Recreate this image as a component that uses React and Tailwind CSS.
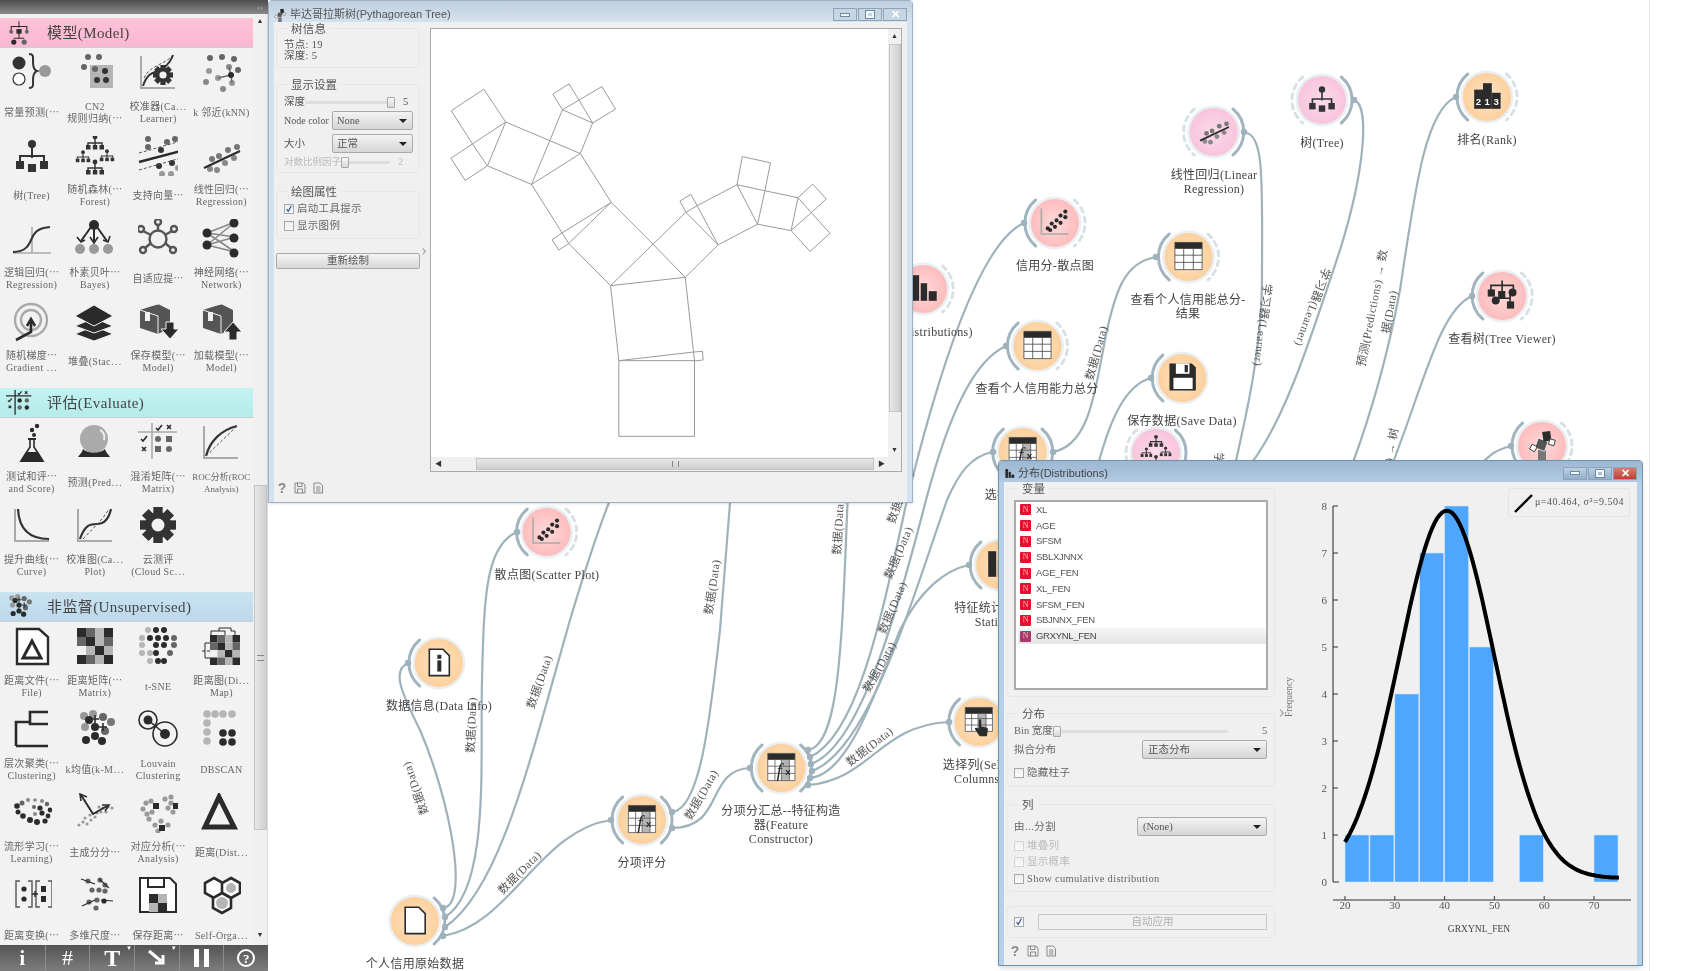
import React from 'react';

const D = '#333';
const G = '#aaa';
const dot = (x, y, r = 3, f = D) => <circle cx={x} cy={y} r={r} fill={f} />;
const box = (x, y, w, h, f = D) => <rect x={x} y={y} width={w} height={h} fill={f} />;
const line = (d, w = 2, s = D) => <path d={d} fill="none" stroke={s} strokeWidth={w} />;
const dash = (d, s = '#555') => <path d={d} fill="none" stroke={s} strokeWidth="1" strokeDasharray="3 2" />;
const axes = (s = G) => line('M3 3V35H37', 2, s);

const gear = (x, y, r) => (
  <g transform={`translate(${x} ${y})`}>
    {[0, 45, 90, 135].map((a) => (
      <rect key={a} x={-r * 0.26} y={-r} width={r * 0.52} height={r * 2} fill={D} transform={`rotate(${a})`} />
    ))}
    <circle r={r * 0.72} fill={D} />
    <circle r={r * 0.36} fill="#f2f2f2" />
  </g>
);

// dendrogram-free little tree, used for the forest icon
const miniTree = (x, y, s) => (
  <g transform={`translate(${x} ${y}) scale(${s})`}>
    {dot(0, -6, 2.4)}
    {line('M0 -4V2M-7 2V0H7V2', 1.4)}
    {box(-9, 2, 4.5, 4.5)}
    {box(-2.2, 2, 4.5, 4.5)}
    {box(4.5, 2, 4.5, 4.5)}
  </g>
);

const pixels = (cells, x0, y0, s) =>
  cells.map((row, j) => row.map((c, i) => <rect key={`${i}-${j}`} x={x0 + i * s} y={y0 + j * s} width={s} height={s} fill={c} />));

const K = '#2b2b2b';
const M = '#666';
const L = '#b5b5b5';
const W = '#f2f2f2';

const icons = {
  constant: (
    <>
      {dot(7, 10, 6.5)}
      <circle cx="7" cy="26" r="6" fill="#fff" stroke={D} strokeWidth="1.2" />
      {line('M17 1c5 0 4 3 4 8c0 5 1 8 4 9c-3 1-4 4-4 9c0 5 1 8-4 8', 2)}
      {dot(33, 18, 6, '#999')}
    </>
  ),
  cn2: (
    <>
      {box(15, 12, 23, 23, L)}
      {dot(13, 4, 3, M)}
      {dot(24, 4, 3, M)}
      {dot(9, 14, 3, M)}
      {dot(20, 16, 3, M)}
      {dot(30, 18, 3)}
      {dot(22, 27, 3)}
      {dot(31, 27, 3)}
    </>
  ),
  calib: (
    <>
      {axes()}
      {line('M5 33C10 18 17 20 24 16C30 12 33 8 35 2', 2)}
      {dash('M6 25C12 12 26 12 34 3')}
      {gear(25, 22, 10)}
    </>
  ),
  knn: (
    <>
      {dot(9, 5, 3, M)}
      {dot(21, 4, 3, M)}
      {dot(33, 6, 3, M)}
      {dot(8, 18, 3, '#999')}
      {dot(37, 17, 3, M)}
      {dot(5, 29, 3, '#888')}
      {dot(17, 25, 3, '#999')}
      {dot(28, 14, 3, '#888')}
      {dot(31, 30, 3, '#999')}
      {dot(22, 36, 3, '#888')}
      {line('M17 25L30 22L28 14M30 22L31 30', 1.4, M)}
      {dot(30, 22, 3, K)}
    </>
  ),
  tree: (
    <>
      {dot(20, 8, 4)}
      {line('M20 10V22M8 30V20H32V30', 2)}
      {box(4, 25, 8, 8)}
      {box(16, 28, 8, 8)}
      {box(28, 25, 8, 8)}
    </>
  ),
  forest: (
    <>
      {miniTree(20, 7, 1)}
      {miniTree(8, 21, 0.8)}
      {miniTree(32, 20, 0.8)}
      {miniTree(20, 32, 1)}
    </>
  ),
  svm: (
    <>
      {dot(10, 3, 3, M)}
      {dot(10, 11, 3, M)}
      {dot(23, 14, 3)}
      {dot(29, 6, 3, M)}
      {dot(37, 3, 3, M)}
      {dot(21, 30, 3)}
      {dot(34, 27, 3)}
      {dot(24, 38, 3, '#999')}
      {dot(33, 38, 3, '#999')}
      {dot(40, 32, 3, '#999')}
      {dash('M1 17L43 5')}
      {dash('M1 34L43 22')}
      {line('M1 26L43 15', 2.4, K)}
    </>
  ),
  linear: (
    <>
      {dot(9, 33, 3, '#888')}
      {dot(16, 34, 3, '#888')}
      {dot(11, 23, 3, '#777')}
      {dot(18, 20, 3, '#777')}
      {dot(24, 27, 3, '#888')}
      {dot(27, 14, 3, '#777')}
      {dot(33, 22, 3, '#888')}
      {dot(36, 11, 3, '#777')}
      {line('M3 32L39 15', 2.2, K)}
    </>
  ),
  logistic: (
    <>
      {line('M1 34H39M20 8V34', 1.6, G)}
      {line('M1 33C14 33 17 26 20 19C24 10 30 9 38 8', 2)}
    </>
  ),
  nb: (
    <>
      {dot(19, 6, 5, K)}
      {line('M19 8V22M16 8L6 22M22 8L32 22', 2, K)}
      {line('M2 18L6 23L10 21M15 18L19 24L23 18M28 21L33 23L35 17', 1.6, K)}
      {dot(5, 30, 5, '#999')}
      {dot(19, 30, 5, '#999')}
      {dot(33, 30, 5, '#999')}
    </>
  ),
  ada: (
    <g fill="#f2f2f2" stroke="#555" strokeWidth="2.4">
      <path d="M20 12V6M27 16L34 12M27 24L33 29M13 24L7 29M13 16L5 12" />
      <circle cx="20" cy="20" r="8.5" />
      <circle cx="20" cy="3" r="3" />
      <circle cx="36" cy="10" r="3" />
      <circle cx="35" cy="31" r="3" />
      <circle cx="5" cy="31" r="3" />
      <circle cx="3" cy="10" r="3" />
    </g>
  ),
  nn: (
    <>
      {line('M6 14L34 3M6 14L34 18M6 14L34 33M6 26L34 3M6 26L34 18M6 26L34 33', 1.6, '#888')}
      {dot(6, 14, 4.5, K)}
      {dot(6, 26, 4.5, K)}
      {dot(33, 4, 4.5, K)}
      {dot(33, 19, 4.5, K)}
      {dot(33, 34, 4.5, K)}
    </>
  ),
  sgd: (
    <>
      <circle cx="19" cy="18" r="16" fill="none" stroke={G} strokeWidth="2.4" />
      <circle cx="19" cy="18" r="10" fill="none" stroke={G} strokeWidth="2.4" />
      {line('M4 38L19 30V20', 2.6, K)}
      {line('M15 24L19 17L23 24', 2.6, K)}
    </>
  ),
  stack: (
    <>
      <path d="M19 24L38 32L19 39L0 32Z" fill={K} stroke="#f2f2f2" />
      <path d="M19 16L38 24L19 31L0 24Z" fill={K} stroke="#f2f2f2" />
      <path d="M19 3L38 14L19 24L0 14Z" fill={K} stroke="#f2f2f2" />
    </>
  ),
  saveModel: (
    <>
      <path d="M2 8L20 2L32 8V26L20 32L2 26Z" fill="#555" />
      <path d="M8 5L24 1M2 8L20 14V32" fill="none" stroke="#f2f2f2" />
      {box(7, 10, 5, 9, '#f2f2f2')}
      <path d="M28 20H36V27H41L32 37L23 27H28Z" fill={K} stroke="#f2f2f2" />
    </>
  ),
  loadModel: (
    <>
      <path d="M2 8L20 2L32 8V26L20 32L2 26Z" fill="#555" />
      <path d="M8 5L24 1M2 8L20 14V32" fill="none" stroke="#f2f2f2" />
      {box(7, 10, 5, 9, '#f2f2f2')}
      <path d="M28 38H36V30H41L32 20L23 30H28Z" fill={K} stroke="#f2f2f2" />
    </>
  ),
  test: (
    <>
      {dot(25, 3, 2.2, K)}
      {dot(20, 7, 2.2, K)}
      {dot(22, 12, 2, K)}
      {line('M16 16H24', 2, K)}
      {line('M18 16V24L9 38H31L22 24V16', 1.6, K)}
      <path d="M14 29H26L32 39H8Z" fill={K} />
    </>
  ),
  pred: (
    <>
      <circle cx="19" cy="16" r="14" fill="#aaa" />
      <path d="M25 7C29 9 30 13 29 17" stroke="#eee" strokeWidth="2" fill="none" />
      <path d="M8 26C7 30 4 32 3 34H35C34 32 31 30 30 26C25 31 13 31 8 26Z" fill={K} />
    </>
  ),
  confusion: (
    <>
      {line('M0 9H39M14 0V36', 1.6, G)}
      {line('M18 5L20 7L24 2', 1.6, K)}
      {line('M29 2L33 6M33 2L29 6', 1.6, K)}
      {line('M3 16L5 18L9 13', 1.6, K)}
      {line('M4 24L8 28M8 24L4 28', 1.6, K)}
      {dot(20, 16, 3, M)}
      {box(28, 13, 6, 6, M)}
      {box(17, 23, 6, 6, M)}
      {dot(31, 26, 3, M)}
    </>
  ),
  confHead: (
    <>
      {line('M0 9H39M14 0V38', 2, K)}
      {line('M18 5L20 7L24 2', 1.8, K)}
      {line('M29 2L33 6M33 2L29 6', 1.8, K)}
      {line('M3 16L5 18L9 13', 1.8, K)}
      {line('M4 24L8 28M8 24L4 28', 1.8, K)}
      {dot(21, 16, 3.4, K)}
      {dot(32, 16, 3.4, M)}
      {dot(21, 27, 3.4, M)}
      {dot(32, 27, 3.4, K)}
    </>
  ),
  roc: (
    <>
      {axes()}
      {line('M5 33C9 18 20 7 36 3', 2.2)}
      {dash('M5 33L36 3')}
    </>
  ),
  lift: (
    <>
      {axes()}
      {line('M6 3C7 24 18 33 37 33', 2.2)}
    </>
  ),
  calPlot: (
    <>
      {axes()}
      {line('M5 33C10 18 16 18 22 18C30 18 34 12 36 3', 2.2)}
      {dash('M8 33C18 22 26 16 34 3')}
    </>
  ),
  cloud: gear(20, 19, 18),
  distFile: (
    <>
      <path d="M5 2H27L36 10V37H5Z" fill="#fff" stroke={K} strokeWidth="2.4" />
      <path d="M20 14L29 31H11Z" fill="none" stroke={K} strokeWidth="3" />
    </>
  ),
  distMatrix: pixels(
    [
      [K, M, L, K],
      [M, K, L, M],
      [W, L, K, L],
      [K, M, L, K],
    ],
    2,
    1,
    9
  ),
  tsne: (
    <>
      {[
        [12, 3, L],
        [20, 3, K],
        [28, 3, K],
        [6, 11, L],
        [14, 11, K],
        [22, 11, K],
        [30, 11, K],
        [38, 11, M],
        [6, 18, L],
        [20, 18, K],
        [28, 18, K],
        [38, 18, M],
        [6, 26, L],
        [14, 26, L],
        [20, 26, K],
        [34, 26, M],
        [14, 34, L],
        [22, 34, K],
        [28, 34, K],
      ].map(([x, y, f]) => (
        <circle key={`${x}-${y}`} cx={x - 2} cy={y} r="3" fill={f} />
      ))}
    </>
  ),
  distMap: (
    <>
      {line('M10 8V4H18V1H30V4H34V8M18 4H24V8', 1, K)}
      {line('M10 16H4V31H10M4 24H1M6 24H10', 1, K)}
      {pixels(
        [
          [K, M, L, K],
          [M, K, L, M],
          [W, L, K, L],
          [K, M, L, K],
        ],
        9,
        8,
        7.5
      )}
    </>
  ),
  hier: <>{line('M4 36V12H18V2H36M18 12V14H36M4 36H36', 2.6, K)}</>,
  kmeans: (
    <>
      {dot(9, 6, 4, '#999')}
      {dot(18, 4, 4, '#999')}
      {dot(28, 7, 4, '#666')}
      {dot(36, 12, 4, '#777')}
      {dot(10, 17, 4, '#999')}
      {dot(20, 17, 4, K)}
      {dot(14, 10, 4, K)}
      {dot(30, 21, 4, '#666')}
      {dot(20, 26, 4, K)}
      {dot(11, 30, 4, K)}
      {dot(27, 31, 4, K)}
      {line('M16 9H24M20 5V13M24 17H32M28 13V21', 1.6, K)}
    </>
  ),
  louvain: (
    <>
      <circle cx="10" cy="10" r="9" fill="none" stroke={K} strokeWidth="1.6" />
      {dot(10, 10, 4.5, K)}
      <circle cx="27" cy="24" r="12" fill="none" stroke={K} strokeWidth="1.6" />
      {dot(27, 24, 5, K)}
      {line('M10 10L27 24', 1.6, K)}
    </>
  ),
  dbscan: (
    <>
      {[
        [6, 4],
        [14, 4],
        [22, 4],
        [31, 4],
        [6, 13],
        [6, 22],
        [6, 31],
      ].map(([x, y]) => (
        <circle key={`${x}-${y}`} cx={x} cy={y} r="3.8" fill={L} />
      ))}
      {dot(22, 23, 3.8, K)}
      {dot(31, 23, 3.8, K)}
      {dot(22, 32, 3.8, K)}
      {dot(31, 32, 3.8, K)}
    </>
  ),
  manifold: (
    <>
      {[
        [5, 13, 2.8, K],
        [10, 10, 2.5, M],
        [16, 7, 2, '#888'],
        [23, 7, 1.8, '#888'],
        [30, 8, 2, '#888'],
        [35, 11, 2.2, M],
        [38, 17, 2.4, K],
        [36, 23, 2.4, K],
        [33, 28, 2.6, K],
        [25, 29, 3, K],
        [18, 27, 3, K],
        [11, 23, 2.8, K],
        [6, 19, 2.5, K],
        [22, 14, 2, M],
        [28, 15, 2.6, K],
        [30, 20, 2.6, K],
        [23, 21, 2, '#888'],
      ].map(([x, y, r, f]) => (
        <circle key={`${x}-${y}`} cx={x} cy={y} r={r} fill={f} />
      ))}
    </>
  ),
  pca: (
    <>
      {[
        [4, 32],
        [8, 29],
        [12, 31],
        [10, 25],
        [16, 27],
        [15, 22],
        [20, 24],
        [22, 20],
        [26, 19],
        [28, 15],
        [33, 14],
        [37, 15],
        [31, 19],
        [24, 14],
      ].map(([x, y]) => (
        <circle key={`${x}-${y}`} cx={x} cy={y} r="1.6" fill="#999" />
      ))}
      {line('M6 2L18 21L32 13', 2, K)}
      {line('M6 8L5 1L12 4M27 12L34 12L30 18', 1.6, K)}
    </>
  ),
  ca: (
    <>
      {[
        [5, 16],
        [8, 10],
        [13, 8],
        [9, 21],
        [14, 19],
        [11, 26],
        [27, 6],
        [33, 4],
        [33, 10],
        [30, 15],
        [35, 19],
        [17, 32],
        [23, 28],
        [30, 32],
        [20, 38],
      ].map(([x, y]) => (
        <circle key={`${x}-${y}`} cx={x} cy={y} r="2.6" fill="#999" />
      ))}
      {box(15, 10, 6, 6, K)}
      {box(35, 10, 6, 6, K)}
      {box(21, 32, 6, 6, K)}
    </>
  ),
  distance: <path d="M18 4L33 34H4Z" fill="none" stroke={K} strokeWidth="5" />,
  distTrans: (
    <>
      {line('M8 5H4V31H8M16 5H20V31H16M28 5H24V31H28M36 5H40V31H36', 1.4, '#555')}
      {dot(12, 13, 2.6, K)}
      {dot(12, 23, 2.6, K)}
      {box(29, 10, 5, 6, K)}
      {box(29, 20, 5, 6, K)}
      {line('M20 18H26M23 15V21', 1.4, K)}
    </>
  ),
  mds: (
    <>
      {dot(13, 5, 2.6, M)}
      {dot(25, 4, 2.6, M)}
      {dot(30, 9, 2.6, M)}
      {dot(17, 14, 2.6, M)}
      {dot(24, 14, 2.6, M)}
      {dot(30, 15, 2.6, M)}
      {dot(14, 26, 2.6, M)}
      {dot(22, 24, 2.6, M)}
      {dot(29, 25, 2.6, K)}
      {dot(21, 32, 2.6, M)}
      {line('M6 3L20 8M24 3L34 12M7 30L20 24M26 24L38 25', 1.2, K)}
    </>
  ),
  saveDist: (
    <>
      <path d="M2 2H32L38 8V36H2Z" fill="#fff" stroke={K} strokeWidth="2" />
      {line('M10 2V11H26V2', 2, K)}
      {pixels(
        [
          [K, L],
          [L, K],
        ],
        11,
        18,
        9
      )}
    </>
  ),
  som: (
    <g stroke={K} strokeWidth="2.6">
      <path d="M13 2L22 7V17L13 22L4 17V7Z" fill="#fff" />
      <path d="M30 2L39 7V17L30 22L21 17V7Z" fill="#fff" />
      <path d="M21 17L30 22V32L21 37L12 32V22Z" fill="#fff" />
      <circle cx="30" cy="12" r="5" fill={L} stroke="none" />
      <circle cx="21" cy="27" r="6" fill={L} stroke="none" />
    </g>
  ),
  file: <path d="M8 4H25L33 12V37H8Z" fill="#fff" stroke={K} strokeWidth="2" />,
  info: (
    <>
      <path d="M8 4H25L33 12V37H8Z" fill="#fff" stroke={K} strokeWidth="2" />
      {box(18, 18, 5, 14, K)}
      {box(18, 11, 5, 5, K)}
    </>
  ),
  table: (
    <>
      {box(3, 3, 34, 34, '#fff')}
      {box(3, 3, 34, 8, K)}
      {line('M3 3H37V37H3ZM3 19H37M3 28H37M14 11V37M26 11V37', 1, '#444')}
    </>
  ),
  fx: (
    <>
      {box(3, 3, 34, 34, '#fff')}
      {box(20, 11, 10, 26, L)}
      {box(3, 3, 34, 8, K)}
      {line('M3 3H37V37H3ZM3 19H37M3 28H37M12 11V37M20 11V37M30 11V37', 1, '#555')}
      <text x="14" y="33" fontSize="24" fontFamily="Liberation Serif" fontStyle="italic" fill={K}>f</text>
      <text x="25" y="30" fontSize="12" fontFamily="Liberation Sans" fontWeight="700" fill={K}>x</text>
    </>
  ),
  select: (
    <>
      {box(3, 3, 34, 30, '#fff')}
      {box(19, 11, 10, 22, L)}
      {box(3, 3, 34, 8, K)}
      {line('M3 3H37V33H3ZM3 17H37M3 25H37M11 11V33M19 11V33M29 11V33', 1, '#555')}
      <path d="M20 20c0-3 3-3 3 0v7l6 1c2 0 3 2 2 5l-1 6h-9l-6-9c0-2 3-2 5 0Z" fill={K} />
    </>
  ),
  save: (
    <>
      <path d="M4 3H32L37 8V37H4Z" fill={K} />
      {box(12, 3, 17, 13, '#fff')}
      {box(23, 5, 4, 9, K)}
      {box(9, 21, 24, 14, '#fff')}
    </>
  ),
  scatter: (
    <>
      {axes(G)}
      {dot(11, 28, 2.6, K)}
      {dot(16, 22, 2.6, K)}
      {dot(20, 26, 2.6, K)}
      {dot(22, 18, 2.6, K)}
      {dot(27, 21, 2.6, K)}
      {dot(27, 12, 2.6, K)}
      {dot(33, 14, 2.6, K)}
      {dot(33, 7, 2.6, K)}
      {dot(14, 30, 2.6, K)}
    </>
  ),
  bars: (
    <>
      {box(5, 4, 10, 32, K)}
      {box(17, 14, 8, 22, K)}
      {box(27, 24, 10, 12, K)}
    </>
  ),
  rank: (
    <>
      {box(4, 12, 11, 24, K)}
      {box(15, 4, 11, 32, K)}
      {box(26, 16, 11, 20, K)}
      <text x="6" y="31" fontSize="12" fontFamily="Liberation Sans" fontWeight="700" fill="#fff">2</text>
      <text x="17" y="31" fontSize="12" fontFamily="Liberation Sans" fontWeight="700" fill="#fff">1</text>
      <text x="28" y="31" fontSize="12" fontFamily="Liberation Sans" fontWeight="700" fill="#fff">3</text>
    </>
  ),
  treeView: (
    <>
      {line('M20 2V8M6 14V8H34V14M20 8V18M30 20V30M12 24H30', 2, K)}
      {box(2, 13, 9, 9, K)}
      {box(15, 15, 9, 9, K)}
      {dot(33, 17, 5, K)}
      {dot(12, 27, 5, K)}
      {box(26, 28, 9, 9, K)}
    </>
  ),
  pyth: (
    <>
      {box(15, 26, 10, 14, '#777')}
      <rect x="13" y="13" width="13" height="13" fill="#555" stroke="#f2f2f2" transform="rotate(20 19 19)" />
      <rect x="21" y="3" width="10" height="12" fill={K} transform="rotate(-8 26 9)" />
      <rect x="6" y="20" width="7" height="7" fill="#fff" stroke={K} transform="rotate(30 9 23)" />
      <rect x="29" y="13" width="7" height="7" fill="#fff" stroke={K} transform="rotate(15 32 16)" />
    </>
  ),
  forestHead: (
    <>
      {line('M20 2V12M8 18V10H32V18M20 20V28M12 28H28', 1.6, K)}
      {dot(8, 18, 3, M)}
      {box(16, 14, 8, 7, K)}
      {dot(32, 18, 3, M)}
      {dot(12, 34, 4, K)}
      {dot(28, 34, 4, M)}
    </>
  ),
};

const sections = [
  {
    title: '模型(Model)',
    icon: 'forestHead',
    head: 'bg-gradient-to-b from-[#fdc2d8] to-[#f9b8d1]',
    items: [
      ['constant', '常量预测(⋯'],
      ['cn2', 'CN2', '规则归纳(⋯'],
      ['calib', '校准器(Ca⋯', 'Learner)'],
      ['knn', 'k 邻近(kNN)'],
      ['tree', '树(Tree)'],
      ['forest', '随机森林(⋯', 'Forest)'],
      ['svm', '支持向量⋯'],
      ['linear', '线性回归(⋯', 'Regression)'],
      ['logistic', '逻辑回归(⋯', 'Regression)'],
      ['nb', '朴素贝叶⋯', 'Bayes)'],
      ['ada', '自适应提⋯'],
      ['nn', '神经网络(⋯', 'Network)'],
      ['sgd', '随机梯度⋯', 'Gradient ⋯'],
      ['stack', '堆叠(Stac⋯'],
      ['saveModel', '保存模型(⋯', 'Model)'],
      ['loadModel', '加载模型(⋯', 'Model)'],
    ],
  },
  {
    title: '评估(Evaluate)',
    icon: 'confHead',
    head: 'bg-gradient-to-b from-[#c2f3f2] to-[#b5ebea]',
    items: [
      ['test', '测试和评⋯', 'and Score)'],
      ['pred', '预测(Pred⋯'],
      ['confusion', '混淆矩阵(⋯', 'Matrix)'],
      ['roc', 'ROC分析(ROC', 'Analysis)'],
      ['lift', '提升曲线(⋯', 'Curve)'],
      ['calPlot', '校准图(Ca⋯', 'Plot)'],
      ['cloud', '云测评', '(Cloud Sc⋯'],
    ],
  },
  {
    title: '非监督(Unsupervised)',
    icon: 'kmeans',
    head: 'bg-gradient-to-b from-[#c9e3f2] to-[#bcd8ea]',
    items: [
      ['distFile', '距离文件(⋯', 'File)'],
      ['distMatrix', '距离矩阵(⋯', 'Matrix)'],
      ['tsne', 't-SNE'],
      ['distMap', '距离图(Di⋯', 'Map)'],
      ['hier', '层次聚类(⋯', 'Clustering)'],
      ['kmeans', 'k均值(k-M⋯'],
      ['louvain', 'Louvain', 'Clustering'],
      ['dbscan', 'DBSCAN'],
      ['manifold', '流形学习(⋯', 'Learning)'],
      ['pca', '主成分分⋯'],
      ['ca', '对应分析(⋯', 'Analysis)'],
      ['distance', '距离(Dist⋯'],
      ['distTrans', '距离变换(⋯'],
      ['mds', '多维尺度⋯'],
      ['saveDist', '保存距离⋯'],
      ['som', 'Self-Orga⋯'],
    ],
  },
];

const Icon = ({ name, className }) => (
  <svg viewBox="0 0 40 40" className={className}>
    {icons[name]}
  </svg>
);

const Sidebar = () => (
  <aside className="relative z-10 flex h-full w-[268px] flex-col bg-[#f2f2f2]">
    <div className="flex h-[14px] shrink-0 items-center justify-end bg-gradient-to-b from-[#4f4f4f] to-[#8a8a8a] pr-[5px] text-[9px] leading-none text-[#bbb]">‹‹</div>
    <div className="flex min-h-0 flex-1 overflow-hidden border-r border-[#ddd]">
      <div className="w-[253px] shrink-0 overflow-hidden pt-[4px]">
        {sections.map((s) => (
          <section key={s.title} className="mb-[8px]">
            <div className={`flex h-[30px] items-center border-b border-[#c8d0d0] ${s.head}`}>
              <Icon name={s.icon} className="ml-[6px] h-[26px] w-[26px]" />
              <span className="mt-[1px] ml-[15px] text-[15px] tracking-[0.4px] text-[#444]">{s.title}</span>
            </div>
            <div className="grid grid-cols-4">
              {s.items.map(([icon, ...lines]) => (
                <div key={icon} className="flex h-[83px] flex-col items-center">
                  <Icon name={icon} className="mt-[5px] h-10 w-10 shrink-0" />
                  <div className={`mt-[5px] flex h-[30px] flex-col justify-center text-center leading-[12px] whitespace-nowrap text-[#666] ${icon === 'roc' ? 'text-[9px]' : 'text-[10px] tracking-[0.3px]'}`}>
                    {lines.map((l) => (
                      <div key={l}>{l}</div>
                    ))}
                  </div>
                </div>
              ))}
            </div>
          </section>
        ))}
      </div>
      <div className="flex w-[14px] flex-col items-center bg-[#f0f0f0]">
        <span className="mt-[3px] text-[7px] leading-[8px] text-[#333]">▲</span>
        <div className="mt-[460px] flex h-[345px] w-[13px] items-center justify-center border border-[#c4c4c4] bg-gradient-to-r from-[#e8e8e8] to-[#d0d0d0]">
          <div className="h-[6px] w-[7px] border-y border-[#888]" />
        </div>
        <span className="mt-auto mb-[6px] text-[7px] leading-[8px] text-[#333]">▼</span>
      </div>
    </div>
    <div className="grid h-[26px] shrink-0 grid-cols-6 overflow-hidden bg-gradient-to-b from-[#555] to-[#7d7d7d] leading-none text-white">
      <div className="flex h-[26px] items-center justify-center text-[20px] font-bold">i</div>
      <div className="flex h-[26px] items-center justify-center border-l border-[#8c8c8c] text-[22px]">#</div>
      <div className="relative flex h-[26px] items-center justify-center border-l border-[#8c8c8c] text-[24px] font-bold">
        T<span className="absolute top-0 right-[2px] text-[6px]">▼</span>
      </div>
      <div className="relative flex h-[26px] items-center justify-center border-l border-[#8c8c8c]">
        <svg viewBox="0 0 20 20" className="h-5 w-5">
          <path d="M2 3L14 13M8 15H16V7" fill="none" stroke="#fff" strokeWidth="3" />
        </svg>
        <span className="absolute top-0 right-[2px] text-[6px]">▼</span>
      </div>
      <div className="flex h-[26px] items-center justify-center gap-[5px] border-l border-[#8c8c8c]">
        <div className="h-[18px] w-[5px] bg-white" />
        <div className="h-[18px] w-[5px] bg-white" />
      </div>
      <div className="flex h-[26px] items-center justify-center border-l border-[#8c8c8c]">
        <div className="flex h-[18px] w-[18px] items-center justify-center rounded-full border-2 border-white text-[13px] font-bold">?</div>
      </div>
    </div>
  </aside>
);

const ARC_L = 'M16.7 13A30 30 0 0 0 16.7 59';
const ARC_R = 'M55.3 13A30 30 0 0 1 55.3 59';

const FILL = { orange: 'url(#nodeOrange)', pink: 'url(#nodePink)', red: 'url(#nodeRed)' };

const nodes = [
  { pos: 'left-[415px] top-[921px]', fill: 'orange', icon: 'file', r: 'solid', lines: ['个人信用原始数据'] },
  { pos: 'left-[439px] top-[663px]', fill: 'orange', icon: 'info', l: 'solid', lines: ['数据信息(Data Info)'] },
  { pos: 'left-[547px] top-[532px]', fill: 'red', icon: 'scatter', l: 'solid', r: 'dash', lines: ['散点图(Scatter Plot)'] },
  { pos: 'left-[642px] top-[820px]', fill: 'orange', icon: 'fx', l: 'solid', r: 'solid', lines: ['分项评分'] },
  { pos: 'left-[781px] top-[768px]', fill: 'orange', icon: 'fx', l: 'solid', r: 'solid', lines: ['分项分汇总--特征构造', '器(Feature', 'Constructor)'] },
  { pos: 'left-[979px] top-[722px]', fill: 'orange', icon: 'select', l: 'solid', lines: ['选择列(Select', 'Columns)'] },
  { pos: 'left-[1000px] top-[565px]', fill: 'orange', icon: 'bars', l: 'solid', lines: ['特征统计(Feature', 'Statistics)'] },
  { pos: 'left-[923px] top-[289px]', fill: 'red', icon: 'bars', r: 'dash', lines: ['分布(Distributions)'] },
  { pos: 'left-[1037px] top-[346px]', fill: 'orange', icon: 'table', l: 'solid', r: 'dash', lines: ['查看个人信用能力总分'] },
  { pos: 'left-[1055px] top-[223px]', fill: 'red', icon: 'scatter', l: 'solid', r: 'dash', lines: ['信用分-散点图'] },
  { pos: 'left-[1188px] top-[257px]', fill: 'orange', icon: 'table', l: 'solid', r: 'dash', lines: ['查看个人信用能总分-', '结果'] },
  { pos: 'left-[1182px] top-[378px]', fill: 'orange', icon: 'save', l: 'solid', lines: ['保存数据(Save Data)'] },
  { pos: 'left-[1214px] top-[132px]', fill: 'pink', icon: 'linear', l: 'dash', r: 'solid', lines: ['线性回归(Linear', 'Regression)'] },
  { pos: 'left-[1322px] top-[100px]', fill: 'pink', icon: 'tree', l: 'dash', r: 'solid', lines: ['树(Tree)'] },
  { pos: 'left-[1487px] top-[97px]', fill: 'orange', icon: 'rank', l: 'solid', r: 'dash', lines: ['排名(Rank)'] },
  { pos: 'left-[1502px] top-[296px]', fill: 'red', icon: 'treeView', l: 'solid', r: 'dash', lines: ['查看树(Tree Viewer)'] },
  { pos: 'left-[1542px] top-[446px]', fill: 'red', icon: 'pyth', l: 'solid', r: 'dash', lines: [] },
  { pos: 'left-[1023px] top-[452px]', fill: 'orange', icon: 'fx', l: 'solid', r: 'solid', lines: ['选择列(Select)'] },
  { pos: 'left-[1156px] top-[453px]', fill: 'pink', icon: 'forest', l: 'dash', r: 'solid', lines: [] },
];

const Node = ({ pos, fill, icon, l, r, lines }) => (
  <div className={`absolute flex -translate-x-1/2 -translate-y-[36px] flex-col items-center ${pos}`}>
    <svg width="72" height="72" viewBox="0 0 72 72" className="shrink-0">
      <circle cx="36" cy="36" r="26.5" fill="#e9eff2" />
      <circle cx="36" cy="36" r="24" fill={FILL[fill]} />
      {l && <path d={ARC_L} fill="none" stroke={l === 'solid' ? '#a2b5be' : '#d9e1e5'} strokeWidth="3" strokeLinecap="round" strokeDasharray={l === 'solid' ? undefined : '5 5'} />}
      {r && <path d={ARC_R} fill="none" stroke={r === 'solid' ? '#a2b5be' : '#d9e1e5'} strokeWidth="3" strokeLinecap="round" strokeDasharray={r === 'solid' ? undefined : '5 5'} />}
      <g transform="translate(20 19) scale(0.8)">{icons[icon]}</g>
    </svg>
    <div className="text-center text-[12px] leading-[14px] tracking-[0.3px] whitespace-nowrap text-[#444]">
      {lines.map((t) => (
        <div key={t}>{t}</div>
      ))}
    </div>
  </div>
);

const links = [
  'M443 908C470 905 450 800 420 730C400 690 392 670 408 663',
  'M445 917C490 890 480 760 482 680C484 600 485 545 517 532',
  'M445 927C500 890 530 760 570 620C585 570 600 525 610 500',
  'M443 936C510 925 540 830 611 820',
  'M672 812C700 810 710 720 720 630C725 570 728 530 731 490',
  'M672 828C725 828 705 770 750 768',
  'M808 750C840 745 842 640 848 490',
  'M810 757C860 735 885 600 907 500C945 345 985 240 1024 223',
  'M811 764C865 745 905 580 926 500C950 410 975 360 1006 346',
  'M812 771C870 750 915 590 947 500C958 475 970 456 993 452',
  'M810 778C850 775 880 680 900 630C920 590 945 570 969 565',
  'M808 785C870 780 880 725 949 722',
  'M1053 452C1090 445 1095 390 1105 340C1115 290 1125 262 1156 257',
  'M1098 465C1110 420 1125 385 1151 378',
  'M1244 132C1265 135 1262 180 1262 280C1262 350 1245 420 1235 465',
  'M1354 100C1370 105 1365 170 1340 250C1310 340 1285 420 1250 465',
  'M1456 97C1425 110 1415 190 1400 290C1385 370 1365 430 1352 465',
  'M1472 296C1440 310 1425 380 1392 465',
  'M1511 446C1495 450 1490 455 1480 465',
];

const ports = [
  [443, 908], [445, 917], [445, 927], [443, 936], [408, 663], [517, 532], [611, 820], [672, 812], [672, 828], [750, 768],
  [808, 750], [810, 757], [811, 764], [812, 771], [810, 778], [808, 785], [949, 722], [969, 565], [1006, 346], [1024, 223],
  [1156, 257], [1151, 378], [1244, 132], [1354, 100], [1456, 97], [1472, 296], [1511, 446], [993, 452], [1053, 452],
];

const linkLabels = [
  ['left-[416px] top-[788px] -rotate-[110deg]', '数据(Data)'],
  ['left-[472px] top-[725px] -rotate-[88deg]', '数据(Data)'],
  ['left-[540px] top-[682px] -rotate-[71deg]', '数据(Data)'],
  ['left-[520px] top-[873px] -rotate-[45deg]', '数据(Data)'],
  ['left-[713px] top-[587px] -rotate-[82deg]', '数据(Data)'],
  ['left-[702px] top-[795px] -rotate-[60deg]', '数据(Data)'],
  ['left-[839px] top-[527px] -rotate-[87deg]', '数据(Data)'],
  ['left-[899px] top-[553px] -rotate-[67deg]', '数据(Data)'],
  ['left-[893px] top-[608px] -rotate-[67deg]', '数据(Data)'],
  ['left-[880px] top-[667px] -rotate-[61deg]', '数据(Data)'],
  ['left-[870px] top-[747px] -rotate-[38deg]', '数据(Data)'],
  ['left-[901px] top-[497px] -rotate-[70deg]', '数据(Data)'],
  ['left-[1097px] top-[353px] -rotate-[75deg]', '数据(Data)'],
  ['left-[1262px] top-[325px] rotate-[97deg]', '学习器(Learner)'],
  ['left-[1312px] top-[307px] rotate-[110deg]', '学习器(Learner)'],
  ['left-[1373px] top-[308px] -rotate-[79deg]', '预测(Predictions) → 数'],
  ['left-[1390px] top-[312px] -rotate-[80deg]', '据(Data)'],
  ['left-[1392px] top-[445px] -rotate-[80deg]', ') → 树'],
  ['left-[1217px] top-[470px] rotate-[95deg]', '学习器'],
];

const Canvas = () => (
  <div className="absolute inset-0">
    <svg className="absolute inset-0" width="1693" height="971">
      <defs>
        <radialGradient id="nodeOrange">
          <stop offset="0%" stopColor="#fee6cb" />
          <stop offset="100%" stopColor="#fcd09c" />
        </radialGradient>
        <radialGradient id="nodePink">
          <stop offset="0%" stopColor="#fbdcea" />
          <stop offset="100%" stopColor="#f8c4dc" />
        </radialGradient>
        <radialGradient id="nodeRed">
          <stop offset="0%" stopColor="#fedada" />
          <stop offset="100%" stopColor="#fdbcbc" />
        </radialGradient>
      </defs>
      {links.map((d) => (
        <path key={d} d={d} fill="none" stroke="#9fb2bb" strokeWidth="2.2" />
      ))}
      <path d="M1649.5 0V971" stroke="#e4e4e4" />
    </svg>
    {linkLabels.map(([pos, t]) => (
      <span key={pos} className={`absolute -translate-x-1/2 -translate-y-1/2 text-[11.5px] leading-none tracking-[0.4px] whitespace-nowrap text-[#555] ${pos}`}>
        {t}
      </span>
    ))}
    {nodes.map((n) => (
      <Node key={n.pos} {...n} />
    ))}
    <svg className="absolute inset-0" width="1693" height="971">
      {ports.map(([x, y]) => (
        <circle key={`${x}-${y}`} cx={x} cy={y} r="3.2" fill="#9fb2bb" />
      ))}
    </svg>
  </div>
);

const Group = ({ title, className, children }) => (
  <div className={`relative rounded-[3px] border border-[#e7e7e7] ${className}`}>
    {title && <span className="absolute -top-[7.5px] left-[11px] bg-[#f0f0f0] px-[3px] text-[11.5px] leading-[14px] text-[#555]">{title}</span>}
    {children}
  </div>
);

const Select = ({ className, children }) => (
  <div className={`flex h-[19px] items-center justify-between rounded-[2px] border border-[#aaa] bg-gradient-to-b from-[#f4f4f4] to-[#d6d6d6] pr-[5px] pl-[4px] text-[10.5px] text-[#555] ${className}`}>
    <span>{children}</span>
    <span className="h-0 w-0 border-x-[4px] border-t-[4px] border-x-transparent border-t-[#222]" />
  </div>
);

const Check = ({ checked, disabled, label, className }) => (
  <div className={`flex h-[12px] items-center gap-[3px] text-[10.5px] tracking-[0.3px] ${disabled ? 'text-[#bbb]' : 'text-[#666]'} ${className ?? ''}`}>
    <div className={`flex h-[10px] w-[10px] items-center justify-center border bg-gradient-to-b from-[#eee] to-[#fafafa] ${disabled ? 'border-[#d4d4d4]' : 'border-[#a8a8a8]'}`}>
      {checked && (
        <svg viewBox="0 0 10 10" className="h-[10px] w-[10px]">
          <path d="M2 5L4 8L8 1" fill="none" stroke="#2a4f9e" strokeWidth="1.4" />
        </svg>
      )}
    </div>
    {label && <span>{label}</span>}
  </div>
);

const Slider = ({ className, thumb }) => (
  <div className={`flex h-[12px] items-center ${className} ${thumb === 'right' ? 'justify-end' : 'justify-start'} relative`}>
    <div className="absolute inset-x-0 h-[3px] rounded-full bg-[#dedede]" />
    <div className="relative h-[11px] w-[8px] rounded-[1px] border border-[#a8a8a8] bg-gradient-to-b from-[#f8f8f8] to-[#d8d8d8]" />
  </div>
);

const FooterIcons = ({ className }) => (
  <div className={`flex h-[14px] items-center gap-[6px] text-[#888] ${className}`}>
    <span className="w-[12px] text-center font-['Liberation_Sans'] text-[14px] font-bold leading-none">?</span>
    <svg viewBox="0 0 12 12" className="h-[12px] w-[12px]">
      <path d="M1 1H9L11 3V11H1ZM3.5 1V4.5H8V1M3.5 11V7H8.5V11" fill="none" stroke="#888" />
    </svg>
    <svg viewBox="0 0 12 12" className="h-[12px] w-[12px]">
      <path d="M2 1H8L10.5 3.5V11H2ZM4 5H8.5M4 7H8.5M4 9H8.5" fill="none" stroke="#888" />
    </svg>
  </div>
);

const TitleButtons = ({ active }) => (
  <div className="flex gap-[1px]">
    {['min', 'max', 'close'].map((b) => (
      <div
        key={b}
        className={`flex h-[13px] w-[24px] items-center justify-center border border-[#8ea3b8] ${
          b === 'close' && active ? 'bg-gradient-to-b from-[#dd7b6c] to-[#c23d30]' : active ? 'bg-gradient-to-b from-[#bcd0e4] to-[#93aecb]' : 'bg-[#c6d6e5]'
        }`}
      >
        {b === 'min' && <div className="h-[2px] w-[8px] bg-[#f4f7fa] outline outline-1 outline-[#708aa4]" />}
        {b === 'max' && <div className="h-[7px] w-[8px] border-2 border-[#f4f7fa] outline outline-1 outline-[#708aa4]" />}
        {b === 'close' && <span className="font-['Liberation_Sans'] text-[11px] font-bold leading-none text-white">✕</span>}
      </div>
    ))}
  </div>
);

const squares = [
  '581,1083 809,1083 809,1311 581,1311',
  '556,857 781,832 806,1057 581,1083',
  '806,1057 833,1055 835,1081 809,1084',
  '556,857 430,730 558,606 684,732',
  '684,732 781,832 880,734 783,636',
  '558,606 465,459 318,552 410,698',
  '410,698 430,730 400,750 380,719',
  '318,552 185,496 240,364 373,420',
  '373,420 465,459 502,367 411,327',
  '240,364 174,265 76,330 140,430',
  '185,496 118,540 75,473 140,430',
  '411,327 382,280 431,249 461,298',
  '502,367 571,325 530,257 461,298',
  '783,636 765,602 798,582 817,616',
  '880,734 999,672 937,553 817,616',
  '937,553 953,468 1038,487 1021,571',
  '999,672 1021,571 1121,592 1100,691',
  '1121,592 1165,551 1206,596 1161,637',
  '1100,691 1157,754 1217,699 1161,637',
];

const TreeWindow = () => (
  <div className="absolute top-0 left-[268px] z-20 flex h-[503px] w-[645px] flex-col rounded-t-[4px] border border-[#9db0c4] bg-[#d3e2f0] shadow-sm">
    <div className="flex h-[21px] shrink-0 items-center justify-between bg-gradient-to-b from-[#bfcfdf] to-[#d5e2ee] pt-[6px] pr-[5px] pl-[4px] font-['Liberation_Sans','Noto_Sans_CJK_SC',sans-serif] text-[11px] text-[#555]">
      <div className="flex items-center gap-[3px]">
        <svg viewBox="0 0 40 40" className="h-[14px] w-[14px]">{icons.pyth}</svg>
        <span>毕达哥拉斯树(Pythagorean Tree)</span>
      </div>
      <TitleButtons />
    </div>
    <div className="mx-[5px] flex min-h-0 flex-1 bg-[#f0f0f0]">
      <div className="flex w-[156px] shrink-0 flex-col">
        <Group title="树信息" className="mt-[6px] ml-[2px] h-[40px] w-[144px] pt-[10px] pl-[7px] text-[10.5px] leading-[11px] tracking-[0.3px] text-[#555]">
          <div>节点: 19</div>
          <div>深度: 5</div>
        </Group>
        <Group title="显示设置" className="mt-[16px] ml-[2px] h-[89px] w-[144px] pt-[11px] pl-[7px] text-[10.5px] text-[#555]">
          <div className="flex h-[12px] items-center">
            <span className="w-[21px]">深度</span>
            <Slider className="w-[90px]" thumb="right" />
            <span className="ml-[8px]">5</span>
          </div>
          <div className="mt-[3px] flex items-center">
            <span className="w-[48px] text-[10px] whitespace-nowrap">Node color</span>
            <Select className="w-[81px]">None</Select>
          </div>
          <div className="mt-[4px] flex items-center">
            <span className="w-[48px]">大小</span>
            <Select className="w-[81px]">正常</Select>
          </div>
          <div className="mt-[3px] flex h-[12px] items-center text-[#bbb]">
            <span className="w-[57px] text-[9.5px] whitespace-nowrap">对数比例因子</span>
            <Slider className="w-[49px]" thumb="left" />
            <span className="ml-[8px]">2</span>
          </div>
        </Group>
        <Group title="绘图属性" className="mt-[18px] ml-[2px] h-[48px] w-[144px] pt-[11px] pl-[7px]">
          <Check checked label="启动工具提示" />
          <Check label="显示图例" className="mt-[5px]" />
        </Group>
        <div className="mt-[14px] ml-[2px] flex h-[16px] w-[144px] items-center justify-center rounded-[2px] border border-[#aaa] bg-gradient-to-b from-[#f5f5f5] to-[#d8d8d8] text-[10.5px] text-[#555]">重新绘制</div>
        <FooterIcons className="mt-auto mb-[7px] ml-[2px]" />
      </div>
      <div className="mt-[6px] flex h-[444px] w-[472px] flex-col border border-[#aaa] bg-white">
        <div className="flex min-h-0 flex-1">
          <svg width="457" height="429" viewBox="15 85 1377 1290" className="shrink-0">
            {squares.map((p) => (
              <polygon key={p} points={p} fill="none" stroke="#999" strokeWidth="3" />
            ))}
          </svg>
          <div className="flex flex-1 flex-col items-center bg-[#f0f0f0]">
            <span className="mt-[3px] text-[7px] leading-[8px] text-[#333]">▲</span>
            <div className="mt-[4px] h-[368px] w-[12px] border border-[#c4c4c4] bg-gradient-to-r from-[#e8e8e8] to-[#cfcfcf]" />
            <span className="mt-auto mb-[3px] text-[7px] leading-[8px] text-[#333]">▼</span>
          </div>
        </div>
        <div className="flex h-[14px] shrink-0 items-center bg-[#f0f0f0]">
          <span className="ml-[4px] text-[7px] text-[#333]">◀</span>
          <div className="ml-[34px] flex h-[12px] w-[398px] items-center justify-center border border-[#c4c4c4] bg-gradient-to-b from-[#e8e8e8] to-[#cfcfcf]">
            <div className="h-[6px] w-[7px] border-x border-[#888]" />
          </div>
          <span className="ml-[4px] text-[7px] text-[#333]">▶</span>
        </div>
      </div>
    </div>
    <span className="absolute top-[240px] left-[152px] text-[18px] leading-none text-[#aaa]">›</span>
  </div>
);

const variables = ['XL', 'AGE', 'SFSM', 'SBLXJNNX', 'AGE_FEN', 'XL_FEN', 'SFSM_FEN', 'SBJNNX_FEN', 'GRXYNL_FEN'];

const bars = [
  [20, 1],
  [25, 1],
  [30, 4],
  [35, 7],
  [40, 8],
  [45, 5],
  [55, 1],
  [70, 1],
];

const cx = (v) => 1345 + (v - 20) * 4.98;
const cy = (n) => 882 - n * 47;
const curve = Array.from({ length: 111 }, (_, i) => {
  const v = 20 + i * 0.5;
  const n = 7.82 * Math.exp(-((v - 40.46) ** 2) / (2 * 9.5 * 9.5)) + 0.08;
  return `${cx(v).toFixed(1)},${cy(n).toFixed(1)}`;
}).join(' ');

const DistChart = () => (
  <svg width="354" height="478" viewBox="1283 482 354 478" className="shrink-0 font-['Liberation_Serif']">
    {bars.map(([v, n]) => (
      <rect key={v} x={cx(v)} y={cy(n)} width="24" height={n * 47} fill="#4ea6ff" stroke="#cfe5fb" strokeWidth="0.6" />
    ))}
    <path d="M1333 506V882" stroke="#222" strokeWidth="1" />
    <path d="M1333 900H1631" stroke="#333" strokeWidth="1" />
    {[0, 1, 2, 3, 4, 5, 6, 7, 8].map((n) => (
      <g key={n}>
        <path d={`M1333 ${cy(n)}H${n === 0 ? 1339 : 1338}`} stroke="#333" />
        <text x="1327" y={cy(n) + 4} fontSize="11" textAnchor="end" fill="#555">{n}</text>
      </g>
    ))}
    {[20, 30, 40, 50, 60, 70].map((v) => (
      <g key={v}>
        <path d={`M${cx(v)} 900V896`} stroke="#333" />
        <text x={cx(v)} y="909" fontSize="11" textAnchor="middle" fill="#555">{v}</text>
      </g>
    ))}
    <polyline points={curve} fill="none" stroke="#000" strokeWidth="4" />
    <text x="1479" y="932" fontSize="9.5" textAnchor="middle" fill="#444">GRXYNL_FEN</text>
    <text x="1292" y="697" fontSize="9.5" textAnchor="middle" fill="#777" transform="rotate(-90 1292 697)">Frequency</text>
    <rect x="1508.5" y="488.5" width="121" height="28" rx="2" fill="#f0f0f0" stroke="#e4e4e4" />
    <path d="M1515 512L1532 495" stroke="#000" strokeWidth="2.4" />
    <text x="1535" y="505" fontSize="10" letterSpacing="0.5" fill="#555">μ=40.464,  σ²=9.504</text>
  </svg>
);

const DistWindow = () => (
  <div className="absolute top-[460px] left-[998px] z-30 flex h-[506px] w-[645px] flex-col rounded-t-[4px] border border-[#6f93a8] bg-[#b5d0e8] shadow-md">
    <div className="flex h-[21px] shrink-0 items-center justify-between bg-gradient-to-b from-[#9db6d2] to-[#b2cbe3] pt-[3px] pr-[5px] pl-[5px] font-['Liberation_Sans','Noto_Sans_CJK_SC',sans-serif] text-[11px] text-[#444]">
      <div className="flex items-center gap-[3px]">
        <svg viewBox="0 0 40 40" className="h-[11px] w-[11px]">{icons.bars}</svg>
        <span>分布(Distributions)</span>
      </div>
      <TitleButtons active />
    </div>
    <div className="relative mx-[5px] flex min-h-0 flex-1 bg-[#f0f0f0]">
      <div className="flex w-[279px] shrink-0 flex-col pl-[3px]">
        <Group title="变量" className="mt-[6px] h-[209px] w-[268px] pt-[11px] pl-[6px]">
          <div className="h-[190px] w-[254px] border-2 border-[#ababab] bg-white pl-[2px] font-['Liberation_Sans','Noto_Sans_CJK_SC',sans-serif] text-[9.5px] tracking-[-0.3px] text-[#555]">
            {variables.map((v, i) => (
              <div
                key={v}
                className={`flex h-[15.8px] items-center gap-[5px] pl-[2px] ${i === 8 ? 'bg-gradient-to-b from-[#f6f6f6] to-[#e4e4e4] text-[#444]' : ''}`}
              >
                <span className={`flex h-[11px] w-[11px] items-center justify-center rounded-[1px] font-['Liberation_Serif'] text-[8px] leading-none text-[#f6bcbc] ${i === 8 ? 'bg-[#a83a6e]' : 'bg-[#e0142f]'}`}>N</span>
                {v}
              </div>
            ))}
          </div>
        </Group>
        <Group title="分布" className="mt-[16px] h-[74px] w-[268px] pt-[10px] pl-[6px] text-[10.5px] text-[#666]">
          <div className="flex h-[14px] items-center">
            <span className="w-[39px] whitespace-nowrap">Bin 宽度</span>
            <Slider className="w-[175px]" thumb="left" />
            <span className="ml-[34px]">5</span>
          </div>
          <div className="mt-[2px] flex items-center justify-between pr-[7px]">
            <span>拟合分布</span>
            <Select className="w-[125px] pl-[5px]">正态分布</Select>
          </div>
          <Check label="隐藏柱子" className="mt-[8px]" />
        </Group>
        <Group title="列" className="mt-[17px] h-[88px] w-[268px] pt-[12px] pl-[6px] text-[10.5px] text-[#666]">
          <div className="flex items-center justify-between pr-[7px]">
            <span className="tracking-[0.5px]">由...分割</span>
            <Select className="w-[130px] pl-[5px]">(None)</Select>
          </div>
          <Check disabled label="堆叠列" className="mt-[4px]" />
          <Check disabled label="显示概率" className="mt-[4px]" />
          <Check label="Show cumulative distribution" className="mt-[5px]" />
        </Group>
        <Group className="mt-[14px] flex h-[32px] w-[268px] items-center pl-[6px]">
          <Check checked />
          <div className="ml-[14px] flex h-[16px] w-[229px] items-center justify-center border border-[#c8c8c8] text-[10.5px] text-[#b0b0b0]">自动应用</div>
        </Group>
        <FooterIcons className="mt-[6px] ml-[2px]" />
      </div>
      <DistChart />
      <span className="absolute top-[218px] left-[274px] text-[22px] leading-none text-[#aaa]">›</span>
    </div>
  </div>
);

export default function App() {
  return (
    <div className="relative flex h-[971px] w-[1693px] overflow-hidden bg-white font-['Liberation_Serif','Noto_Sans_CJK_SC',serif] blur-[0.35px]">
      <Canvas />
      <Sidebar />
      <TreeWindow />
      <DistWindow />
    </div>
  );
}
